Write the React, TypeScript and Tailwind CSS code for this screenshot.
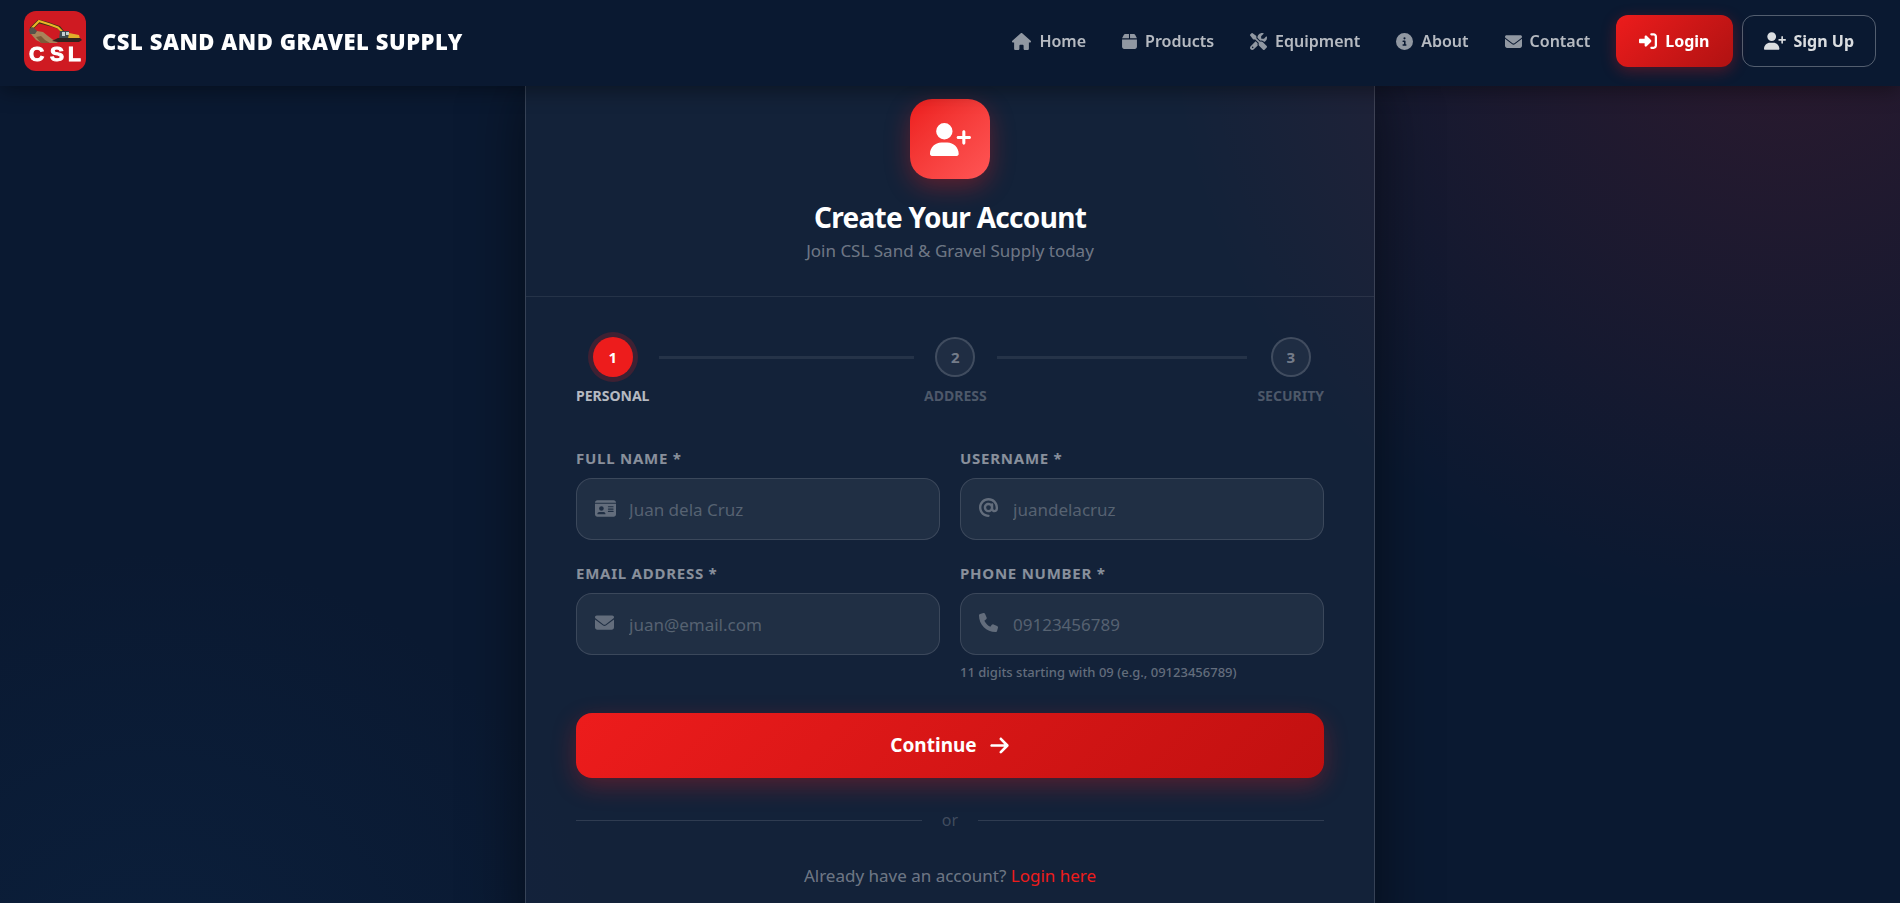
import { useState } from "react";
import type { FormEvent } from "react";
import type { IconType } from "react-icons";
import {
  FaArrowRight,
  FaAt,
  FaBox,
  FaCircleInfo,
  FaEnvelope,
  FaHouse,
  FaIdCard,
  FaPhone,
  FaRightToBracket,
  FaScrewdriverWrench,
  FaUserPlus,
} from "react-icons/fa6";

type Field = {
  name: string;
  label: string;
  placeholder: string;
  type: string;
  icon: IconType;
  iconSize: string;
  hint?: string;
};

const navLinks = [
  { label: "Home", href: "#home", icon: FaHouse, iconSize: "size-[19px]" },
  { label: "Products", href: "#products", icon: FaBox, iconSize: "h-[17px] w-[15px]" },
  { label: "Equipment", href: "#equipment", icon: FaScrewdriverWrench, iconSize: "size-[17px]" },
  { label: "About", href: "#about", icon: FaCircleInfo, iconSize: "size-[17px]" },
  { label: "Contact", href: "#contact", icon: FaEnvelope, iconSize: "size-[17px]" },
];

const steps = ["Personal", "Address", "Security"];

const fields: Field[] = [
  {
    name: "fullname",
    label: "Full Name *",
    placeholder: "Juan dela Cruz",
    type: "text",
    icon: FaIdCard,
    iconSize: "size-[21px]",
  },
  {
    name: "username",
    label: "Username *",
    placeholder: "juandelacruz",
    type: "text",
    icon: FaAt,
    iconSize: "size-[19px]",
  },
  {
    name: "email",
    label: "Email Address *",
    placeholder: "juan@email.com",
    type: "email",
    icon: FaEnvelope,
    iconSize: "size-[19px]",
  },
  {
    name: "phone",
    label: "Phone Number *",
    placeholder: "09123456789",
    type: "tel",
    icon: FaPhone,
    iconSize: "size-[19px]",
    hint: "11 digits starting with 09 (e.g., 09123456789)",
  },
];

function Logo() {
  return (
    <svg viewBox="0 0 62 60" className="h-[60px] w-[62px]" aria-hidden="true">
      <rect width="62" height="60" rx="12" fill="#cf1a22" />
      {/* rubble */}
      <path d="M7 23l6-3 6 1 5 4 4 3 6 4H18l-6-3z" fill="#a8835a" />
      <path d="M12 26l5-1 4 4 5 3h-9z" fill="#7d5a38" />
      {/* boom and arm */}
      <path
        d="M7 18l8-8M15 10.500l11 3 9 3 4 5"
        stroke="#3b3216"
        strokeWidth="3.400"
        strokeLinejoin="round"
        fill="none"
      />
      <path
        d="M8 17l7-7 11 3.500 8 3 4 4"
        stroke="#e9b626"
        strokeWidth="2.200"
        strokeLinejoin="round"
        fill="none"
      />
      {/* bucket */}
      <path d="M5 18l4-2 4 4-2 3-5 0z" fill="#55514a" />
      {/* cab, body and tracks */}
      <path d="M36 20l9 0 1 8H35z" fill="#3f4c50" />
      <path d="M38 21h3v4h-3zM42 21h3v3h-3z" fill="#c3d0d2" />
      <path d="M45 22l10 2 1 4H44z" fill="#dfae2a" />
      <path d="M34 27h22l2 2-3 2H34l-6-1z" fill="#2f2420" />
      <text
        y="50"
        fill="#fff"
        stroke="#fff"
        strokeWidth="1"
        fontFamily="Liberation Sans, sans-serif"
        fontWeight="700"
        fontSize="21"
      >
        <tspan x="5">C</tspan>
        <tspan x="26">S</tspan>
        <tspan x="44">L</tspan>
      </text>
    </svg>
  );
}

function Navbar() {
  return (
    <header className="fixed inset-x-0 top-0 z-10 flex h-[86px] items-center justify-between bg-[#0a1931] px-6 pb-1 shadow-[0_4px_20px_rgba(0,0,0,0.4)]">
      <a href="#home" className="flex items-center gap-4">
        <Logo />
        <span className="text-[22px] leading-8 font-black tracking-wide text-white">
          CSL SAND AND GRAVEL SUPPLY
        </span>
      </a>
      <nav className="flex items-center gap-9">
        {navLinks.map(({ label, href, icon: Icon, iconSize }) => (
          <a
            key={label}
            href={href}
            className="flex items-center gap-2 text-base font-semibold text-white/70"
          >
            <Icon className={`${iconSize} text-white/55`} />
            {label}
          </a>
        ))}
        <div className="-ml-2.5 flex gap-[9px]">
          <button className="flex h-[52px] items-center gap-2 rounded-xl bg-linear-135 from-[#ed1c1c] to-[#b01212] px-[23px] text-base font-bold text-white shadow-[0_4px_15px_rgba(237,28,28,0.3)]">
            <FaRightToBracket className="size-[18px]" />
            Login
          </button>
          <button className="flex h-[52px] items-center gap-2 rounded-xl border border-white/30 px-[21px] text-base font-bold text-white/85">
            <FaUserPlus className="size-[22px]" />
            Sign Up
          </button>
        </div>
      </nav>
    </header>
  );
}

function Stepper({ current }: { current: number }) {
  return (
    <ol className="flex items-start justify-between">
      {steps.map((step, i) => (
        <li key={step} className={i > 0 ? "flex flex-1 items-start" : "flex items-start"}>
          {i > 0 && <div className="mx-2.5 mt-[19px] h-[3px] flex-1 bg-white/8" />}
          <div className="flex flex-col items-center gap-2">
            <span
              className={
                i === current
                  ? "flex size-10 items-center justify-center rounded-full bg-[#ed1c1c] text-[15px] font-bold text-white shadow-[0_0_0_5px_rgba(237,28,28,0.2)]"
                  : "flex size-10 items-center justify-center rounded-full border-2 border-white/15 bg-white/5 text-[15px] font-bold text-white/40"
              }
            >
              {i + 1}
            </span>
            <span
              className={
                i === current
                  ? "text-sm leading-[21px] font-bold text-white/70 uppercase"
                  : "text-sm leading-[21px] font-bold text-white/25 uppercase"
              }
            >
              {step}
            </span>
          </div>
        </li>
      ))}
    </ol>
  );
}

export default function App() {
  const [values, setValues] = useState<Record<string, string>>({});
  const [step, setStep] = useState(0);

  const handleSubmit = (e: FormEvent) => {
    e.preventDefault();
    setStep(Math.min(step + 1, steps.length - 1));
  };

  return (
    <div className="h-screen overflow-hidden bg-[#0a1931] bg-[radial-gradient(circle_620px_at_94%_0%,rgba(237,28,28,0.15),transparent),radial-gradient(circle_460px_at_8%_112%,rgba(15,55,100,0.22),transparent)] font-['Noto_Sans','Open_Sans',sans-serif]">
      <Navbar />
      <main className="px-6 pt-[58px]">
        <section className="mx-auto max-w-[850px] rounded-3xl border border-white/15 bg-white/4 pb-10 shadow-[0_25px_60px_rgba(0,0,0,0.5)]">
          <div className="flex flex-col items-center border-b border-white/8 px-12 pt-10 pb-[29px]">
            <div className="flex size-20 items-center justify-center rounded-[22px] bg-linear-135 from-[#ed1c1c] to-[#ff5555] text-white shadow-[0_8px_25px_rgba(237,28,28,0.35)]">
              <FaUserPlus className="size-[41px]" />
            </div>
            <h1 className="mt-5 text-[28px] leading-9 font-bold tracking-tight text-white">
              Create Your Account
            </h1>
            <p className="text-[17px] leading-8 text-white/40">
              Join CSL Sand & Gravel Supply today
            </p>
          </div>

          <div className="px-[50px] pt-10">
            <Stepper current={step} />

            <form onSubmit={handleSubmit} className="mt-10">
              <div className="grid grid-cols-2 gap-x-5 gap-y-[21px]">
                {fields.map(({ name, label, placeholder, type, icon: Icon, iconSize, hint }) => (
                  <div key={name}>
                    <label
                      htmlFor={name}
                      className="block text-[15px] leading-6 font-bold tracking-wider text-white/50 uppercase"
                    >
                      {label}
                    </label>
                    <div className="relative mt-2">
                      <Icon
                        className={`absolute top-5 left-[19px] text-white/30 ${iconSize}`}
                      />
                      <input
                        id={name}
                        name={name}
                        type={type}
                        value={values[name] || ""}
                        onChange={(e) =>
                          setValues({ ...values, [name]: e.target.value })
                        }
                        placeholder={placeholder}
                        className="h-[62px] w-full rounded-2xl border border-white/12 bg-white/6 pr-4 pl-[52px] text-[17px] text-white outline-none placeholder:text-white/25"
                      />
                    </div>
                    {hint && (
                      <p className="mt-[7px] text-[13px] leading-[21px] font-medium text-white/35">
                        {hint}
                      </p>
                    )}
                  </div>
                ))}
              </div>

              <button
                type="submit"
                className="mt-[30px] flex h-[65px] w-full items-center justify-center gap-3 rounded-2xl bg-linear-135 from-[#ed1c1c] to-[#c11010] text-[19px] font-bold text-white shadow-[0_8px_25px_rgba(237,28,28,0.3)]"
              >
                Continue
                <FaArrowRight className="size-[21px]" />
              </button>
            </form>

            <div className="mt-[30px] flex items-center gap-5 text-base leading-6 text-white/20">
              <div className="h-px flex-1 bg-white/12" />
              or
              <div className="h-px flex-1 bg-white/12" />
            </div>

            <p className="mt-[30px] text-center text-[17px] leading-7 text-white/40">
              Already have an account?{" "}
              <a href="#login" className="text-[#ed1c1c]">
                Login here
              </a>
            </p>
          </div>
        </section>
      </main>
    </div>
  );
}
